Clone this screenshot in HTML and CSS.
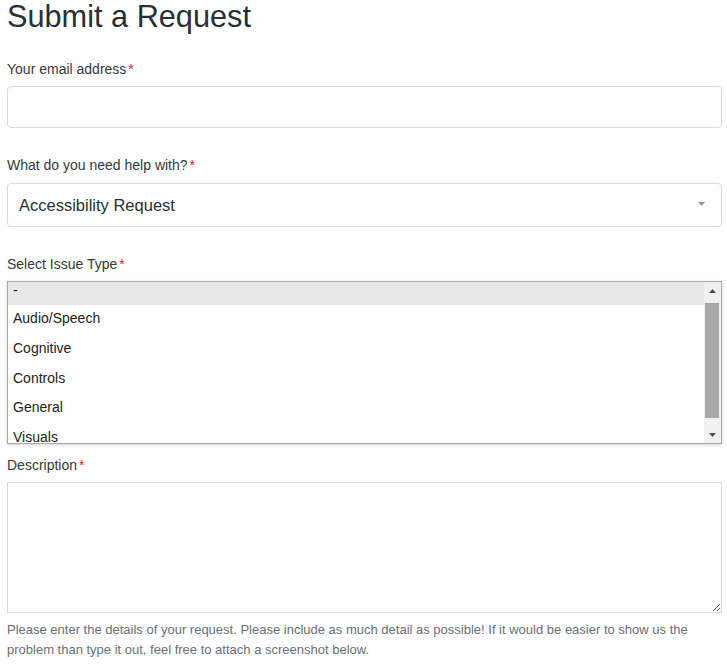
FILE: index.html
```html
<!DOCTYPE html>
<html lang="en">
<head>
<meta charset="utf-8">
<title>Submit a Request</title>
<link rel="stylesheet" href="styles.css">
</head>
<body>
<main class="page">
  <h1 class="title">Submit a Request</h1>

  <div class="field field-first">
    <label class="label label-tight" for="email">Your email address<span class="req">*</span></label>
    <input class="input" id="email" type="email">
  </div>

  <div class="field field-gap-27">
    <div class="label">What do you need help with?<span class="req">*</span></div>
    <div class="select">
      <span class="select-value">Accessibility Request</span>
      <svg class="caret" width="7" height="4" viewBox="0 0 7 4"><path d="M0 0h7L3.5 4z" fill="#8c959c"/></svg>
    </div>
  </div>

  <div class="field field-gap-27">
    <div class="label label-tight">Select Issue Type<span class="req">*</span></div>
    <div class="listbox">
      <ul class="options">
        <li class="option selected">-</li>
        <li class="option">Audio/Speech</li>
        <li class="option">Cognitive</li>
        <li class="option">Controls</li>
        <li class="option">General</li>
        <li class="option">Visuals</li>
        <li class="option">Other</li>
      </ul>
      <div class="scrollbar">
        <div class="sb-btn"><svg width="7" height="4" viewBox="0 0 7 4"><path d="M0 4h7L3.5 0z" fill="#505050"/></svg></div>
        <div class="sb-track"><div class="sb-thumb"></div></div>
        <div class="sb-btn"><svg width="7" height="4" viewBox="0 0 7 4"><path d="M0 0h7L3.5 4z" fill="#505050"/></svg></div>
      </div>
    </div>
  </div>

  <div class="field field-gap-11">
    <label class="label label-tight" for="desc">Description<span class="req">*</span></label>
    <textarea class="textarea" id="desc"></textarea>
    <p class="hint">Please enter the details of your request. Please include as much detail as possible! If it would be easier to show us the problem than type it out, feel free to attach a screenshot below.</p>
  </div>
</main>
</body>
</html>
```

FILE: styles.css
```css
html, body {
  margin: 0;
  padding: 0;
  background: #ffffff;
}

body {
  font-family: "Liberation Sans", Arial, sans-serif;
  color: #333333;
  overflow: hidden;
}

.page {
  padding: 0 5px 0 7px;
}

.title {
  margin: 0;
  padding-top: 1px;
  font-size: 30.7px;
  line-height: 32px;
  font-weight: normal;
  color: #2a2f33;
}

.field {
  display: flex;
  flex-direction: column;
}

.field-first { margin-top: 26px; }
.field-gap-27 { margin-top: 27px; }
.field-gap-11 { margin-top: 11px; }

.label {
  display: block;
  font-size: 14px;
  line-height: 20px;
  margin-bottom: 8px;
  color: #333a40;
}

.label-tight {
  margin-bottom: 7px;
}

.req {
  color: #e0202b;
  margin-left: 2px;
}

.input {
  box-sizing: border-box;
  display: block;
  width: 100%;
  height: 42px;
  margin: 0;
  border: 1px solid #d8dcde;
  border-radius: 4px;
  padding: 0 10px;
  font: 14px "Liberation Sans", Arial, sans-serif;
  outline: none;
}

.select {
  box-sizing: border-box;
  height: 44px;
  border: 1px solid #d8dcde;
  border-radius: 4px;
  padding: 10px 16px 10px 11px;
  display: flex;
  align-items: center;
  justify-content: space-between;
}

.select-value {
  font-size: 16.5px;
  line-height: 22px;
  color: #2a2f33;
}

.caret {
  display: block;
  margin-top: -3px;
}

.listbox {
  box-sizing: border-box;
  height: 163px;
  border: 1px solid #a9a9a9;
  box-shadow: 0 1px 3px rgba(0, 0, 0, 0.18);
  display: flex;
  overflow: hidden;
  background: #fff;
}

.options {
  list-style: none;
  margin: 0;
  padding: 0;
  flex: 1;
  overflow: hidden;
}

.option {
  font-size: 14px;
  line-height: 14px;
  padding: 1px 5px 8px;
  margin-bottom: 6.75px;
  color: #222222;
  white-space: nowrap;
}

.option.selected {
  background: #e8e8e8;
  margin-bottom: 5px;
}

.scrollbar {
  width: 17px;
  display: flex;
  flex-direction: column;
  background: #f1f1f1;
}

.sb-btn {
  height: 17px;
  display: flex;
  align-items: center;
  justify-content: center;
}

.sb-btn svg {
  display: block;
}

.sb-track {
  flex: 1;
  padding-top: 4px;
}

.sb-thumb {
  height: 115px;
  margin: 0 2px 0 1px;
  background: #a8a8a8;
}

.textarea {
  box-sizing: border-box;
  display: block;
  width: 100%;
  height: 131px;
  margin: 0;
  border: 1px solid #d8dcde;
  border-radius: 0;
  padding: 8px 10px;
  font: 14px "Liberation Sans", Arial, sans-serif;
  resize: vertical;
  outline: none;
}

.hint {
  margin: 7px 0 0;
  font-size: 13px;
  line-height: 20px;
  color: #68707a;
}
```
